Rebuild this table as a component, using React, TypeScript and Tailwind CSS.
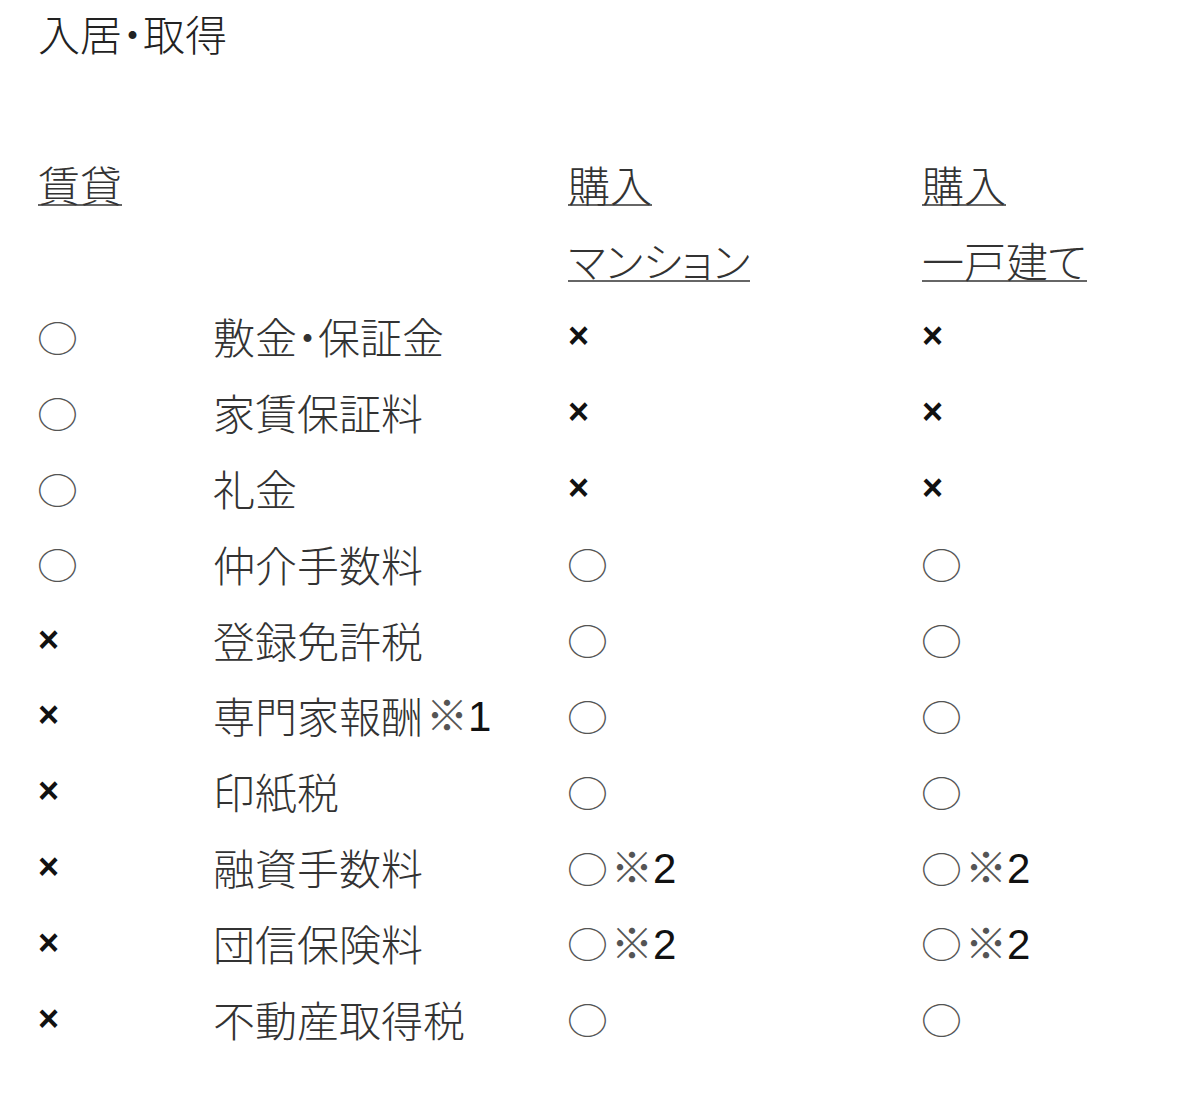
import React from "react";

const CJK = "font-['Noto_Sans_CJK_JP','Noto_Sans_CJK_SC',sans-serif] [font-feature-settings:'palt'] font-light";

function Maru() {
  return <span className={`${CJK} inline-block text-[41px] leading-none text-[#555] -ml-[1px] scale-y-[0.86]`}>○</span>;
}
function Batsu() {
  return <span className="inline-block font-['Liberation_Sans',Arial,sans-serif] font-bold text-[36px] leading-none text-[#111]">×</span>;
}
function Kome({ n, gap }: { n: string; gap?: boolean }) {
  return (
    <span className={`inline-flex items-baseline ${gap ? "ml-[3px]" : ""}`}>
      <span className={`${CJK} text-[42px] leading-none text-[#555]`}>※</span>
      <span className="font-['Liberation_Sans',Arial,sans-serif] text-[42px] leading-none text-[#111]">{n}</span>
    </span>
  );
}

function Cell({ v }: { v: string }) {
  if (v === "○") return <Maru />;
  if (v === "×") return <Batsu />;
  if (v === "○※2")
    return (
      <span className="inline-flex items-center">
        <Maru />
        <Kome n="2" gap />
      </span>
    );
  return null;
}

function Label({ t }: { t: string }) {
  const m = t.match(/^(.*)※(\d)$/);
  if (m) {
    return (
      <span className="inline-flex items-center">
        <span className={`${CJK} text-[42px] leading-none text-[#333]`}>{m[1]}</span>
        <Kome n={m[2]} gap />
      </span>
    );
  }
  return <span className={`${CJK} text-[42px] leading-none text-[#333]`}>{t}</span>;
}

function Head({ t }: { t: string }) {
  return (
    <span className={`${CJK} inline-block text-[42px] leading-[40px] text-[#333] border-b-[2px] border-[#666]`}>{t}</span>
  );
}

const rows: [string, string, string, string][] = [
  ["○", "敷金・保証金", "×", "×"],
  ["○", "家賃保証料", "×", "×"],
  ["○", "礼金", "×", "×"],
  ["○", "仲介手数料", "○", "○"],
  ["×", "登録免許税", "○", "○"],
  ["×", "専門家報酬※1", "○", "○"],
  ["×", "印紙税", "○", "○"],
  ["×", "融資手数料", "○※2", "○※2"],
  ["×", "団信保険料", "○※2", "○※2"],
  ["×", "不動産取得税", "○", "○"],
];

export default function App() {
  return (
    <div className="w-[1200px] h-[1112px] bg-white pl-[38px] overflow-hidden">
      <div className="h-[66px] flex items-center">
        <h1 className={`${CJK} text-[42px] leading-none text-[#222]`}>入居・取得</h1>
      </div>
      <div className="mt-[81px] grid grid-cols-[175px_355px_354px_1fr] auto-rows-[75.8px]">
        <div className="flex items-center"><Head t="賃貸" /></div>
        <div />
        <div className="flex items-center"><Head t="購入" /></div>
        <div className="flex items-center"><Head t="購入" /></div>
        <div />
        <div />
        <div className="flex items-center"><Head t="マンション" /></div>
        <div className="flex items-center"><Head t="一戸建て" /></div>
        {rows.map((r, i) => (
          <React.Fragment key={i}>
            <div className="flex items-center"><Cell v={r[0]} /></div>
            <div className="flex items-center"><Label t={r[1]} /></div>
            <div className="flex items-center"><Cell v={r[2]} /></div>
            <div className="flex items-center"><Cell v={r[3]} /></div>
          </React.Fragment>
        ))}
      </div>
    </div>
  );
}
